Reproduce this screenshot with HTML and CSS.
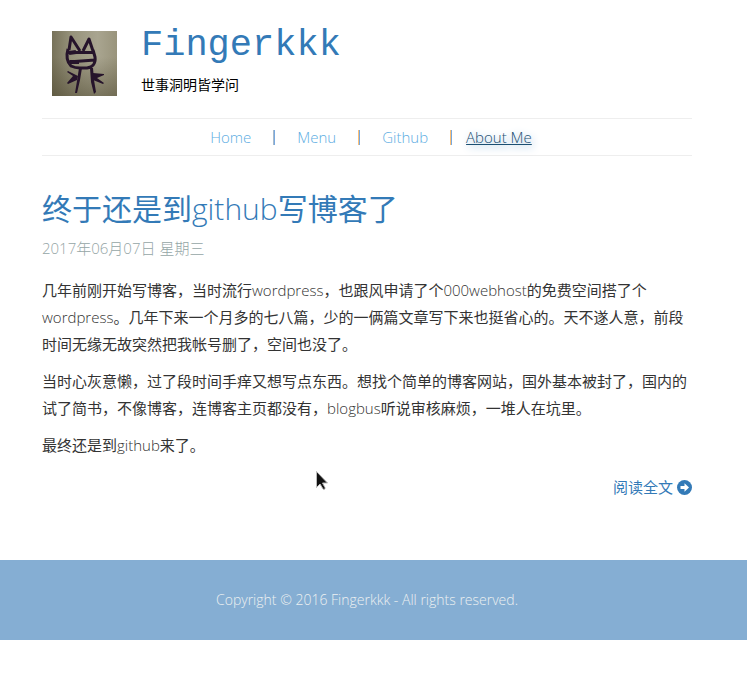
FILE: index.html
```
<!DOCTYPE html>
<html lang="zh-CN">
<head>
<meta charset="utf-8">
<meta name="viewport" content="width=device-width, initial-scale=1">
<title>Fingerkkk</title>
<link rel="stylesheet" href="styles.css">
</head>
<body>
<div class="page">
  <header class="masthead">
    <svg class="avatar" viewBox="0 0 65 65" role="img" aria-label="Fingerkkk">
      <defs>
        <linearGradient id="paper" x1="0" y1="0" x2="1" y2="0">
          <stop offset="0" stop-color="#77725a"/>
          <stop offset=".3" stop-color="#96927b"/>
          <stop offset=".7" stop-color="#a9a590"/>
          <stop offset="1" stop-color="#99947c"/>
        </linearGradient>
        <linearGradient id="shade" x1="0" y1="0" x2="0" y2="1">
          <stop offset=".4" stop-color="#4a442c" stop-opacity="0"/>
          <stop offset="1" stop-color="#4a442c" stop-opacity=".5"/>
        </linearGradient>
      </defs>
      <path fill="url(#paper)" d="M0 0h65v65H0z"/>
      <path fill="url(#shade)" d="M0 0h65v65H0z"/>
      <g fill="none" stroke="#26142b" stroke-width="3" stroke-linejoin="round">
        <path d="M17 19 19 6l9 14M31 20l6-12 4 12M16 18C14 25 15 31 19 35q4 2 9 2h7c6-1 9-5 8-11l-2-7M16 21.500h25M16 31l27-2"/>
        <path d="M17 22 24 21M18 31h9" stroke-width="4"/>
      </g>
      <g fill="#26142b">
        <path d="M27 37h3l-2 12-3 13h-2l2-12zM38 37h3l1 12 2 12-2 2-3-12z"/>
        <path d="m26 45-10-5-1 1 6 4-6 7 1 1 9-4zM41 42l11 1v1l-7 3 7 5-1 1-10-4z"/>
      </g>
    </svg>
    <div>
      <h1 class="site-name"><a href="#">Fingerkkk</a></h1>
      <p class="tagline">世事洞明皆学问</p>
    </div>
  </header>
  <nav class="menu">
    <a href="#">Home</a>
    <span class="bar first"></span>
    <a href="#">Menu</a>
    <span class="bar"></span>
    <a href="#">Github</a>
    <span class="bar last"></span>
    <a class="active" href="#">About Me</a>
  </nav>
  <main>
    <article>
      <h2 class="post-title"><a href="#">终于还是到<span class="latin">github</span>写博客了</a></h2>
      <time class="date" datetime="2017-06-07">2017年06月07日 星期三</time>
      <p>几年前刚开始写博客，当时流行<span class="latin">wordpress</span>，也跟风申请了个<span class="latin">000webhost</span>的免费空间搭了个<span class="latin">wordpress</span>。几年下来一个月多的七八篇，少的一俩篇文章写下来也挺省心的。天不遂人意，前段时间无缘无故突然把我帐号删了，空间也没了。</p>
      <p>当时心灰意懒，过了段时间手痒又想写点东西。想找个简单的博客网站，国外基本被封了，国内的试了简书，不像博客，连博客主页都没有，<span class="latin">blogbus</span>听说审核麻烦，一堆人在坑里。</p>
      <p>最终还是到<span class="latin">github</span>来了。</p>
      <a class="more" href="#">阅读全文
        <svg viewBox="0 0 15 15" aria-hidden="true"><circle cx="7.5" cy="7.5" r="7.5" fill="#337ab7"/><path fill="#fff" d="M3.500 6H7.500V3.200L12 7.500 7.500 11.800V9H3.500z"/></svg>
      </a>
    </article>
  </main>
</div>
<footer class="footer">Copyright © 2016 Fingerkkk - All rights reserved.</footer>
<svg class="pointer" viewBox="0 0 14 21" aria-hidden="true"><path d="M1.500 1.500v16l3.500-3.500 3 5c1 1.200 2.500 0 2-1.500L7.500 13H12.500z" fill="#111" stroke="#bbb"/></svg>
</body>
</html>
```
FILE: styles.css
```
* { box-sizing: border-box; }
body {
  margin: 0;
  background: #fff;
  color: #333;
  font: 300 15px/27px "Open Sans", "Noto Sans CJK SC", sans-serif;
}
a { color: #337ab7; text-decoration: none; }
h1, h2, p { margin: 0; font-weight: 400; }
.latin { font-weight: 300; }
.page { padding: 0 55px 0 42px; }
.masthead {
  display: flex;
  gap: 24px;
  padding: 24px 10px 20px;
}
.avatar { width: 65px; height: 65px; margin-top: 7px; }
.site-name {
  font: 400 37px/42px "Courier New", Courier, FreeMono, "Liberation Mono", monospace;
}
.tagline {
  margin-top: 5px;
  color: #000;
  font-size: 14px;
}
.menu {
  display: flex;
  justify-content: center;
  align-items: center;
  height: 38px;
  padding-left: 8px;
  border: solid #eee;
  border-width: 1px 0;
}
.menu a { color: #5dade2; }
.bar {
  width: 2px;
  height: 15px;
  margin: 0 22px;
  border-left: 1px solid #fdbf75;
  background: #78a9df;
}
.bar.first { border-color: #a9b9c9; }
.bar.last { margin-right: 14px; }
.menu .active {
  color: #1b4f72;
  text-decoration: underline;
  text-shadow: 2px 2px 8px #85aed3;
}
.post-title {
  padding-top: 33px;
  font-size: 30px;
  line-height: 40px;
}
.date {
  display: block;
  margin: 6px 0 15px;
  color: #95a5a6;
}
article p { margin-bottom: 10px; }
.more {
  display: flex;
  justify-content: flex-end;
  align-items: center;
  gap: 4px;
  margin-top: 15px;
  font-weight: 400;
}
.more svg { width: 15px; height: 15px; }
.footer {
  margin-top: 59px;
  padding: 26px 13px 27px 0;
  background: #85aed3;
  color: #ecf0f1;
  font-size: 14px;
  text-align: center;
}
.pointer {
  position: absolute;
  top: 470px;
  left: 315px;
  width: 14px;
  height: 21px;
}
```
